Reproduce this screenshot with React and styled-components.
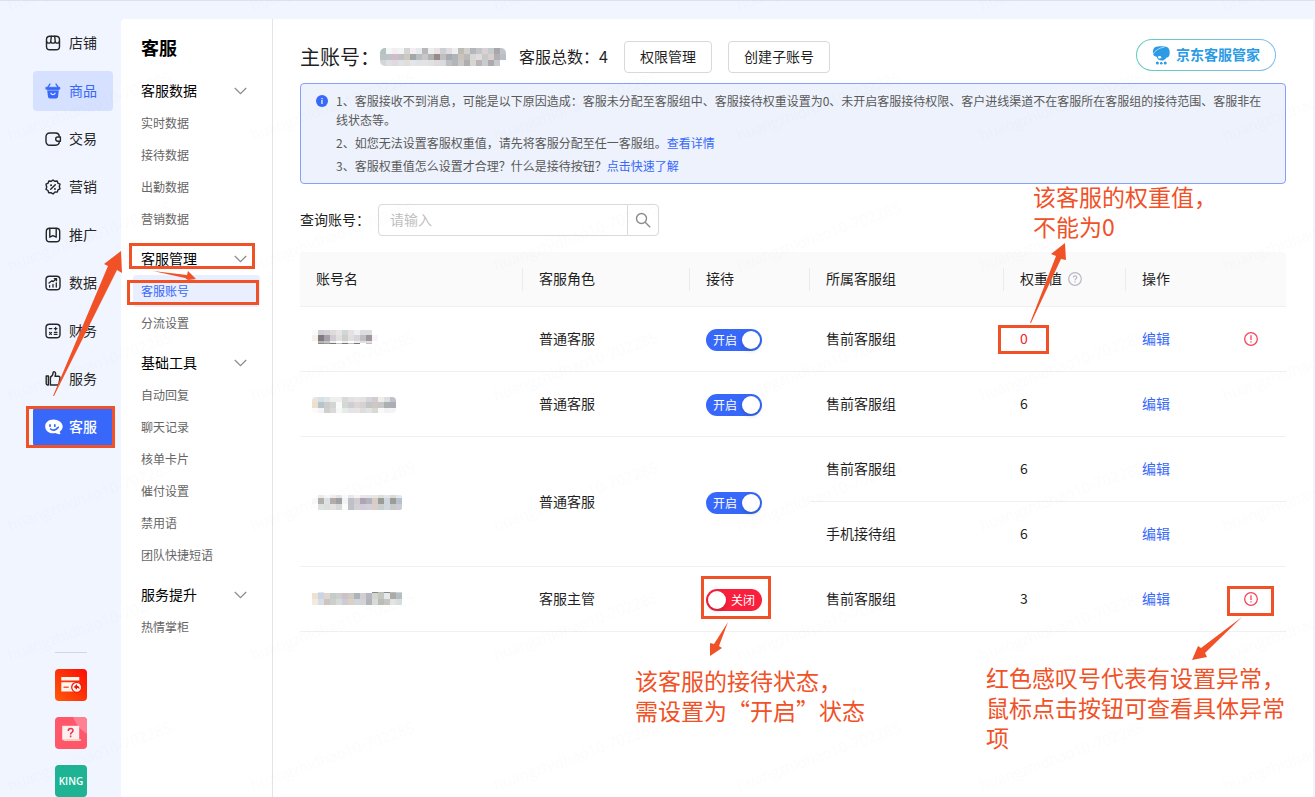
import React, { useState } from 'react';
import styled, { createGlobalStyle, css } from 'styled-components';

const GlobalStyle = createGlobalStyle`
  *, *::before, *::after {
    box-sizing: border-box;
  }

  body {
    margin: 0;
    background: #f0f5ff;
    color: #1f1f1f;
    font-family: 'Noto Sans CJK SC', 'Noto Sans', sans-serif;
    font-size: 14px;
    line-height: 20px;
  }

  button, input {
    font: inherit;
  }

  a {
    color: #3768fa;
    text-decoration: none;
  }
`;

const Page = styled.div`
  position: relative;
  display: flex;
  min-height: 100vh;
  padding: 18px 2px 0 0;
  border-top: 1px solid #dfe1ee;
`;

/* ---------- first level navigation ---------- */

const Rail = styled.nav`
  display: flex;
  flex: none;
  flex-direction: column;
  width: 121px;
  padding: 4px 8px 0 33px;
`;

const RailList = styled.ul`
  display: grid;
  gap: 8px;
  margin: 0;
  padding: 0;
  list-style: none;
`;

const RailLink = styled.a`
  display: flex;
  align-items: center;
  gap: 8px;
  height: 40px;
  padding: 0 0 2px 12px;
  border-radius: 4px;
  color: #262626;

  svg {
    flex: none;
    margin-top: 2px;
    overflow: visible;
  }

  ${({ $state }) =>
    $state === 'hover' &&
    css`
      background: #d6e0ff;
      color: #3768fa;
    `}

  ${({ $state }) =>
    $state === 'active' &&
    css`
      background: #3768fa;
      color: #fff;
      font-weight: 500;
    `}
`;

const Shortcuts = styled.div`
  display: grid;
  gap: 16px;
  width: 32px;
  margin: auto 0 0 22px;
  padding-top: 16px;
  border-top: 1px solid #d4d6da;
`;

const Shortcut = styled.a`
  display: flex;
  align-items: center;
  justify-content: center;
  height: 32px;
  border-radius: 4px;
  background: ${({ $bg }) => $bg};
  color: #fff;
  font-family: 'Open Sans', 'Noto Sans', sans-serif;
  font-size: 10px;
  font-weight: 600;
`;

/* ---------- second level navigation ---------- */

const SubNav = styled.nav`
  flex: none;
  width: 152px;
  padding: 0 12px 24px;
  border-right: 1px solid #e3e4e8;
  border-top-left-radius: 4px;
  background: #fff;
`;

const SubTitle = styled.h2`
  margin: 0;
  padding: 16px 8px 8px;
  color: #000;
  font-size: 18px;
  font-weight: 700;
  line-height: 24px;
`;

const GroupButton = styled.button`
  display: flex;
  align-items: center;
  justify-content: space-between;
  width: 100%;
  height: 40px;
  padding: 8px 13px 2px 8px;
  border: 0;
  background: none;
  color: #000;
  cursor: pointer;

  svg {
    margin-top: 2px;
  }
`;

const GroupList = styled.ul`
  margin: 0;
  padding: 0;
  list-style: none;
`;

const GroupLink = styled.a`
  display: block;
  padding-left: 8px;
  border-radius: 4px;
  background: ${({ $active }) => ($active ? '#e9efff' : 'none')};
  color: ${({ $active }) => ($active ? '#3768fa' : '#666')};
  font-size: 12px;
  line-height: 32px;
`;

/* ---------- main column ---------- */

const Main = styled.main`
  flex: 1;
  min-width: 0;
  padding: 20px 27px 24px;
  background: #fff;
`;

const Header = styled.header`
  display: flex;
  align-items: flex-start;
  justify-content: space-between;
  padding-right: 10px;
`;

const HeaderInfo = styled.div`
  display: flex;
  align-items: center;
  padding-top: 2px;
`;

const Account = styled.h1`
  display: flex;
  align-items: center;
  margin: 0 13px 0 0;
  font-size: 20px;
  font-weight: 400;
  line-height: 32px;
`;

const Total = styled.span`
  margin-right: 16px;
  padding-bottom: 2px;
  font-size: 16px;
`;

const OutlineButton = styled.button`
  height: 32px;
  margin-right: 16px;
  padding: 0 15px 2px;
  border: 1px solid #d9d9d9;
  border-radius: 4px;
  background: #fff;
  color: #1f1f1f;
  cursor: pointer;
`;

const ManagerLink = styled.a`
  display: flex;
  align-items: center;
  gap: 6px;
  height: 32px;
  padding: 0 15px 2px;
  border: 1px solid transparent;
  border-radius: 16px;
  background:
    linear-gradient(#fff, #fff) padding-box,
    linear-gradient(90deg, #5fcdbb, #7fbcf0) border-box;
  color: #2b9be6;
  font-weight: 700;

  svg {
    margin-top: 2px;
  }
`;

const Notice = styled.section`
  display: flex;
  gap: 8px;
  margin-top: 10px;
  padding: 7px 16px 8px 15px;
  border: 1px solid #87a0fc;
  border-radius: 4px;
  background: #edf2fc;
  color: #595959;
  font-size: 12px;
  line-height: 19px;

  > svg {
    flex: none;
    margin-top: 4px;
  }

  p {
    margin: 0 0 4px;
  }

  p:last-child {
    margin: 0;
  }
`;

const SearchRow = styled.form`
  display: flex;
  align-items: center;
  gap: 8px;
  margin: 20px 0 16px;

  label {
    padding-bottom: 2px;
  }
`;

const SearchBox = styled.div`
  display: flex;
  width: 281px;
  height: 32px;
  border: 1px solid #d9d9d9;
  border-radius: 4px;
  background: #fff;
`;

const SearchInput = styled.input`
  flex: 1;
  min-width: 0;
  padding: 0 11px 2px;
  border: 0;
  background: none;
  color: #1f1f1f;
  outline: 0;

  &::placeholder {
    color: #bfbfbf;
  }
`;

const SearchButton = styled.button`
  display: flex;
  align-items: center;
  justify-content: center;
  width: 31px;
  padding: 0;
  border: 0;
  border-left: 1px solid #d9d9d9;
  background: none;
  cursor: pointer;
`;

/* ---------- accounts table ---------- */

const Table = styled.table`
  width: 100%;
  border-spacing: 0;
  table-layout: fixed;
`;

const Th = styled.th`
  height: 55px;
  padding: 0 16px 2px;
  border-bottom: 1px solid #f0f0f0;
  background: linear-gradient(#ebebeb, #ebebeb) right center / 1px 23px no-repeat #fafafa;
  font-weight: 400;
  text-align: left;

  &:first-child {
    border-top-left-radius: 4px;
  }

  &:last-child {
    border-top-right-radius: 4px;
    background: #fafafa;
  }

  svg {
    margin-left: 6px;
    vertical-align: -2px;
  }
`;

const Td = styled.td`
  height: 65px;
  padding: 0 16px 2px;
  border-bottom: 1px solid #f0f0f0;
  color: ${({ $danger }) => ($danger ? '#f5222d' : 'inherit')};
`;

const NameTd = styled(Td)`
  padding: 0 12px;

  svg {
    display: block;
  }
`;

const SwitchTd = styled(Td)`
  padding: 2px 16px 0;
`;

const WarnTd = styled(Td)`
  padding: 0 16px;
`;

const SwitchLabel = styled.label`
  position: relative;
  display: flex;
  align-items: center;
  justify-content: space-between;
  flex-direction: ${({ $on }) => ($on ? 'row' : 'row-reverse')};
  width: 56px;
  height: 22px;
  padding: ${({ $on }) => ($on ? '0 2px 0 7px' : '0 7px 0 2px')};
  border-radius: 11px;
  background: ${({ $on }) => ($on ? '#3768fa' : '#fa1f3c')};
  color: #fff;
  font-size: 12px;
  cursor: pointer;

  &::after {
    content: '';
    width: 18px;
    height: 18px;
    border-radius: 50%;
    background: #fff;
    box-shadow: 0 2px 4px rgba(0, 35, 11, 0.2);
  }
`;

const SwitchInput = styled.input`
  position: absolute;
  inset: 0;
  margin: 0;
  opacity: 0;
  cursor: pointer;
`;

const WarnButton = styled.button`
  display: block;
  padding: 0;
  border: 0;
  background: none;
  cursor: pointer;

  svg {
    display: block;
  }
`;

/* ---------- annotations drawn over the page ---------- */

const Overlay = styled.svg`
  position: absolute;
  top: -1px;
  left: 0;
  width: 100%;
  height: calc(100% + 1px);
  pointer-events: none;
`;

const Note = styled.p`
  position: absolute;
  top: ${({ $top }) => $top}px;
  left: ${({ $left }) => $left}px;
  width: ${({ $width }) => $width}px;
  margin: 0;
  color: #f15127;
  font-size: 23px;
  line-height: 30px;
  white-space: pre-line;
`;

/* ---------- icons ---------- */

const Icon = ({ size = 16, children, ...rest }) => (
  <svg
    width={size}
    height={size}
    viewBox="0 0 16 16"
    fill="none"
    stroke="currentColor"
    strokeWidth="1.4"
    strokeLinecap="round"
    strokeLinejoin="round"
    aria-hidden="true"
    {...rest}
  >
    {children}
  </svg>
);

const railIcons = {
  shop: (
    <Icon>
      <rect x="1.5" y="1.2" width="13" height="13.6" rx="3.4" />
      <path d="M1.6 6.2c.2 2.6 4 2.6 4.2 0 .2 2.6 4.2 2.6 4.4 0 .2 2.6 4 2.6 4.2 0M6.3 1.3 5.8 6.2M9.7 1.3l.5 4.9" />
    </Icon>
  ),
  goods: (
    <Icon>
      <path d="M1.2 4.3h13.6v1.9H1.2z" fill="currentColor" strokeWidth=".8" />
      <path d="M2 6h12l-1 7.8a1.9 1.9 0 0 1-1.9 1.7H4.9A1.9 1.9 0 0 1 3 13.800z" fill="currentColor" stroke="none" />
      <path d="M3 4.200 5 1M13 4.200 11 1" />
      <path d="M5.900 10.300c.8 1.700 3.400 1.700 4.200 0" stroke="#d6e0ff" />
      <path d="M2.400 7.300h11.200" stroke="#d6e0ff" strokeWidth=".5" />
    </Icon>
  ),
  trade: (
    <Icon>
      <path d="M14.300 5.200A3.600 3.600 0 0 0 10.800 2H4.600A3.600 3.600 0 0 0 1 5.600v5A3.600 3.600 0 0 0 4.600 14.200h6.200a3.600 3.600 0 0 0 3.500-3.200" />
      <path d="M15.400 6v4.200h-2.600a2.100 2.100 0 0 1 0-4.200z" />
    </Icon>
  ),
  promo: (
    <Icon>
      <path d="M8 1l1.900 1.300 2.300-.3.700 2.200 2.100 1-.7 2.200.7 2.400-2 1.100-.7 2.200-2.300-.1L8 15l-2-1.400-2.300.1-.7-2.200-2-1.100.7-2.400L1 5.200l2.100-1L3.800 2l2.300.3z" />
      <path d="M10.300 5.700l-4.600 4.600" />
      <path d="M6 6.200h.1M9.900 9.900h.1" strokeWidth="1.900" />
    </Icon>
  ),
  spread: (
    <Icon>
      <rect x="1.300" y="1.200" width="13.400" height="13.600" rx="3.400" />
      <path d="M4.800 1.400v8.800L8 8.600l3.200 1.600V1.400" />
    </Icon>
  ),
  data: (
    <Icon>
      <rect x="1" y="1.200" width="14" height="13.600" rx="3.400" />
      <path d="M4.600 12v-1.400M8 12V9.300M11.300 12V7.800M4 8l3-2.300 1.200.8 3.300-2.800M9.400 3.700h2.100v2" strokeWidth="1.300" />
    </Icon>
  ),
  finance: (
    <Icon>
      <rect x="1" y="1.200" width="14" height="13.600" rx="3.400" />
      <path d="M4.200 5.600h2.600M9.300 5.600H12M10.650 4.250v2.700M4.500 9.300l2 2M6.500 9.300l-2 2M9.300 9.300H12M9.300 11.400H12" strokeWidth="1.200" />
    </Icon>
  ),
  service: (
    <Icon>
      <path d="M1.200 5h2.200v9H2.700A1.500 1.500 0 0 1 1.200 12.500z" />
      <path d="M5.400 6c1.900-.8 2.600-2.300 2.700-4.300.2-1.500 2.600-1.100 2.500.9 0 1-.2 1.700-.6 2.700h3.500c1.100 0 1.700.8 1.500 1.800l-1 5.300c-.2 1-.8 1.600-1.800 1.600H5.400z" />
    </Icon>
  ),
  support: (
    <Icon stroke="none">
      <path
        d="M8.400.6C3.800.6.2 3.500.2 7.400c0 4 3.600 6.900 8 6.900.9 0 1.800-.1 2.600-.3.900.9 2.700 1.400 5 1.100-.9-.8-1.100-1.700-.9-2.500 1.700-1.300 2.800-3 2.800-5C17.700 3.700 13.200.6 8.400.6z"
        fill="currentColor"
      />
      <path d="M5 5.900v1.300M9.800 5.900v1.300M5.600 10c1.800 1.900 5.400 1.500 7-1.200" stroke="#3768fa" strokeWidth="1.700" />
      <path d="M12 8.200l2-.9-.2 2.200z" fill="#3768fa" />
    </Icon>
  ),
};

const ChevronIcon = () => (
  <svg width="13" height="8" viewBox="0 0 13 8" fill="none" aria-hidden="true">
    <path d="M.8 1l5.700 5.600L12.200 1" stroke="#8c8c8c" strokeWidth="1.300" />
  </svg>
);

const InfoIcon = () => (
  <svg width="12" height="12" viewBox="0 0 12 12" aria-hidden="true">
    <circle cx="6" cy="6" r="6" fill="#3768fa" />
    <path d="M5.400 5.100h1.200v4H5.400zM5.400 2.900h1.200v1.300H5.400z" fill="#fff" />
  </svg>
);

const HelpIcon = () => (
  <svg width="14" height="14" viewBox="0 0 14 14" fill="none" stroke="#b8b9c6" strokeWidth="1.200" aria-hidden="true">
    <circle cx="7" cy="7" r="6.300" />
    <path d="M5.300 5.600c0-2.300 3.500-2.200 3.500-.1 0 1.200-1.800 1.300-1.800 2.700M7 9.300v1.300" />
  </svg>
);

const WarnIcon = () => (
  <svg width="14" height="14" viewBox="0 0 14 14" fill="none" stroke="#f8445c" strokeWidth="1.300" aria-hidden="true">
    <circle cx="7" cy="7" r="6.300" />
    <path d="M7 3.300v4.700M7 9.200v1.400" />
  </svg>
);

const SearchIcon = () => (
  <svg width="16" height="16" viewBox="0 0 16 16" fill="none" stroke="#8c8c8c" strokeWidth="1.400" aria-hidden="true">
    <circle cx="6.500" cy="6.500" r="5" />
    <path d="M10.200 10.200l5 5" />
  </svg>
);

const DogLogo = () => (
  <svg width="18" height="19" viewBox="0 0 18 19" aria-hidden="true">
    <path
      d="M3 1.200C6 0 12.500 0 15 1.100c2.600 1.600 3.200 4.700 2.400 7.800-.5 2-1.700 2.500-3 2.500-.9 2-2.700 3.100-4.800 3.100-2.600 0-4.400-1.300-4.900-3.700C2 10.500.9 8.800.9 6.200.9 4 1.600 2.100 3 1.200z"
      fill="#2b9be6"
    />
    <path d="M1.200 8C3 4.500 7 2 12.500 1" fill="none" stroke="#fff" strokeWidth=".6" />
    <ellipse cx="7.600" cy="11.200" rx="1.600" ry="1.200" fill="#fff" />
    <circle cx="5.300" cy="17" r="1.500" fill="#2b9be6" />
    <circle cx="9.300" cy="17.200" r="1.300" fill="#2b9be6" />
    <circle cx="13.200" cy="17" r="1.500" fill="#2b9be6" />
  </svg>
);

const CardIcon = () => (
  <svg width="32" height="32" viewBox="0 0 32 32" fill="none" aria-hidden="true">
    <path d="M6.300 8h18v3.500h-18zM6.300 13.200h18v9.400h-18z" fill="#fff5ef" />
    <path d="M8.500 18.200h5.200" stroke="#f33a10" strokeWidth="1.200" />
    <circle cx="21.700" cy="18.300" r="5" fill="#fff5ef" stroke="#f51d08" strokeWidth="1.300" />
    <path d="M18.800 18l3.200-2.900v1.700c1.600.1 2.500 1.300 2.500 3.300-.7-.9-1.400-1.200-2.500-1.200v1.800z" fill="#e01a0c" />
  </svg>
);

const QuestionIcon = () => (
  <svg width="32" height="32" viewBox="0 0 32 32" fill="none" aria-hidden="true">
    <path d="M18 0h10a4 4 0 0 1 4 4v13C26 13 21 8 18 0z" fill="#ff8093" />
    <path d="M7.200 8.800h17v14h-17z" fill="#fdeef0" />
    <path d="M7.200 22.300h18.600v1.700H9z" fill="#f7cdb9" />
    <path d="M13.300 13.900c0-3.200 4.700-3 4.700-.2 0 1.800-2.400 1.700-2.400 3.700M15.600 18.500v1.800" stroke="#e8364f" strokeWidth="1.600" />
  </svg>
);

// masked account names, one array of colours per line of blocks
const Mosaic = ({ rows, heights, top = 0, height = 18, radius = 0, label }) => {
  const width = Math.max(...rows.map(row => row.length)) * 6;
  const id = `mask-${label}`;
  let y = top;

  return (
    <svg width={width} height={height} role="img" aria-label="已隐藏的账号" shapeRendering="crispEdges">
      <clipPath id={id}>
        <rect width={width} y={top} height={heights.reduce((a, b) => a + b, 0)} rx={radius} />
      </clipPath>
      <g clipPath={`url(#${id})`}>
        {rows.map((row, r) => {
          const rowY = y;
          y += heights[r];
          return row.map((fill, c) => (
            <rect key={`${r}-${c}`} x={c * 6} y={rowY} width="6" height={heights[r]} fill={`#${fill}`} />
          ));
        })}
      </g>
    </svg>
  );
};

/* ---------- data ---------- */

const railItems = [
  { icon: 'shop', text: '店铺' },
  { icon: 'goods', text: '商品', state: 'hover' },
  { icon: 'trade', text: '交易' },
  { icon: 'promo', text: '营销' },
  { icon: 'spread', text: '推广' },
  { icon: 'data', text: '数据' },
  { icon: 'finance', text: '财务' },
  { icon: 'service', text: '服务' },
  { icon: 'support', text: '客服', state: 'active' },
];

const groups = [
  { title: '客服数据', items: ['实时数据', '接待数据', '出勤数据', '营销数据'] },
  { title: '客服管理', items: ['客服账号', '分流设置'] },
  { title: '基础工具', items: ['自动回复', '聊天记录', '核单卡片', '催付设置', '禁用语', '团队快捷短语'] },
  { title: '服务提升', items: ['热情掌柜'] },
];

const ownerMask = {
  label: 'owner',
  radius: 5,
  heights: [6, 6, 6],
  rows: [
    'b3c2c3 f5f5f5 f1eff2 f4f4f5 d5d5d6 f3eef1 e6eaec b9b7b9 ededee e9e2e4 ccd0d5 dfdddf eeeeef bcbcb7 d4cfcf b4b6b9 c4c5c9 d8d3d2 c7cacc a9a6ab bfc5cb'.split(' '),
    'b9c4c3 c1c4c6 d1bccb bfc1c2 cdc9be a1a7ab b9bdc0 c7c6c8 b3b0b1 958b8d c4bdbd a7abb0 b0b4b8 c9c3bb bcbab9 d6d7d8 e3dbd9 c7c9cd d9cfcc b3afb5 b8c0c5'.split(' '),
    'd3d6d5 dddfe2 e2d8e0 e0e1e3 dedfdc e3e6e9 e0e2e6 e4e2e3 e1e0e2 e0dadb d5dbe1 bac0c5 b2b6b9 c8c8c6 afaeb1 d7d4d2 b8b4b9 c9cbce abaaae c6cacf ffffff'.split(' '),
  ],
};

const accounts = [
  {
    mask: {
      label: 'a1',
      heights: [5, 6, 2, 1],
      rows: [
        'fbfaf8 d0cdd2 d3d0d8 dedbd9 e4e5e4 d2d6d4 e6e0df eeeff5 dddce1 dddcde ffffff'.split(' '),
        'f5f2ea 83787f a3a0ac d0ccd0 e0e0df cccfcd e3dfdd d6d5d9 bfbdc5 a09699 f6f5fb'.split(' '),
        'ffffff b5b5b5 c3c3c3 f0f0f0 ffffff f0f0f0 ffffff f0f0f0 e0e0e0 e0e0e0 ffffff'.split(' '),
        'ffffff 8a8a8a 999999 777777 c0c0c0 777777 c0c0c0 777777 ffffff c0c0c0 ffffff'.split(' '),
      ],
    },
    role: '普通客服',
    on: true,
    warn: true,
    teams: [{ name: '售前客服组', weight: 0 }],
  },
  {
    mask: {
      label: 'a2',
      radius: 4,
      top: 2,
      heights: [5, 6, 5],
      rows: [
        'ebe4da d5e1ea e2e5e6 efefef efefef d9d9d9 e4e0df e8e4e4 e2e2e6 d8d5da cfcdd5 f1ece8 dadfe3 c2c2c6'.split(' '),
        'efdfcd b6c5c8 cbcccc d4d4d3 fafafa cedad2 cecdd6 dbd5d7 d5d2d1 c4c5c8 d0c8be c6c9cc adb1ab aeacb8'.split(' '),
        'fafafa f2f4f5 cfcfcf dadada f7f7f7 e7ebe9 e4e4e6 e8e4e4 dddddd e3e3e3 d9d8d4 f9f9f9 f2f2f4 f2f4f6'.split(' '),
      ],
    },
    role: '普通客服',
    on: true,
    teams: [{ name: '售前客服组', weight: 6 }],
  },
  {
    mask: {
      label: 'a3',
      radius: 2,
      top: 2,
      heights: [3, 6, 6],
      rows: [
        'ffffff ececea f7f7f7 f1eeee e4e7ea fafafa e9e9ec f4f4f4 eae6ec e5e8ea ece6e2 dcdfdb e4e7ea d9dbd6 e1e8ee'.split(' '),
        'f9f9f9 b4b1ab dde3e5 b5adab a1a1a5 f3f3f3 bfbfc7 d0cdd1 aea4b3 b3b3bd d8ccc6 9a9d95 ced7df 9c9e96 b6c0cf'.split(' '),
        'ffffff dce4e2 dedede e2e2e0 d6d9d8 fafafa c0c0c8 d3d1d5 d1cdd8 d3d0d9 dccdc8 c9cfd1 d0d8de cacacd cdccd2'.split(' '),
      ],
    },
    role: '普通客服',
    on: true,
    teams: [
      { name: '售前客服组', weight: 6 },
      { name: '手机接待组', weight: 6 },
    ],
  },
  {
    mask: {
      label: 'a4',
      top: 2,
      heights: [1, 6, 6],
      rows: [
        'ffffff dfe6ef ffffff ffffff ffffff ffffff ffffff ffffff ffffff ffffff 888888 bbbbbb 888888 bbbbbb d0d8de'.split(' '),
        'efe1d0 cbd4e4 dfd6d0 c6cac9 cccfce cbc2c6 d0cac6 adb4b9 cfcfcf b8b5c3 d2d6cf c4c6c0 e4eaea aaacaa b5bfc5'.split(' '),
        'f4ebe0 dadde6 cfc5c0 cdcfce d6dbda cdcbd6 decfc5 d0d6dc cfd4d6 b4b3ba d8dbd8 bcbcb8 c5c5c2 e3e5e4 d9dddb'.split(' '),
      ],
    },
    role: '客服主管',
    on: false,
    warn: true,
    teams: [{ name: '售前客服组', weight: 3 }],
  },
];

const colWidths = [223, 167, 120, 194, 122, 102, 58];

const marks = [
  [26, 406, 89, 42],
  [129, 243, 126, 26],
  [127, 280, 132, 25],
  [998, 325, 51, 29],
  [701, 576, 70, 43],
  [1227, 586, 47, 30],
];

const arrows = [
  '53,396 108,266 104,264 121,251 122,273 117,270 54,396',
  '153,271 187,275 188,271 196,279 188,280 185,278',
  '1030,323 1056,256 1051,254 1065,243 1066,260 1061,259 1031,323',
  '728,622 714,644 710,643 710,656 722,648 719,646',
  '1242,617 1201,648 1198,646 1192,660 1207,657 1205,653',
];

const notes = [
  { top: 180, left: 1033, width: 190, text: '该客服的权重值，\n不能为0' },
  { top: 664, left: 635, width: 240, text: '该客服的接待状态，\n需设置为“开启”状态' },
  { top: 661, left: 986, width: 300, text: '红色感叹号代表有设置异常，鼠标点击按钮可查看具体异常项' },
];

/* ---------- pieces ---------- */

const Switch = ({ defaultOn }) => {
  const [on, setOn] = useState(defaultOn);

  return (
    <SwitchLabel $on={on}>
      <SwitchInput type="checkbox" checked={on} onChange={e => setOn(e.target.checked)} />
      {on ? '开启' : '关闭'}
    </SwitchLabel>
  );
};

const AccountRows = ({ account }) => {
  const { mask, role, on, warn, teams } = account;
  const span = teams.length;

  return teams.map((team, i) => (
    <tr key={team.name}>
      {i === 0 && (
        <>
          <NameTd rowSpan={span}>
            <Mosaic {...mask} />
          </NameTd>
          <Td rowSpan={span}>{role}</Td>
          <SwitchTd rowSpan={span}>
            <Switch defaultOn={on} />
          </SwitchTd>
        </>
      )}
      <Td>{team.name}</Td>
      <Td $danger={team.weight === 0}>{team.weight}</Td>
      <Td>
        <a href="#edit">编辑</a>
      </Td>
      <WarnTd>
        {warn && (
          <WarnButton type="button" aria-label="查看异常">
            <WarnIcon />
          </WarnButton>
        )}
      </WarnTd>
    </tr>
  ));
};

const App = () => (
  <>
    <GlobalStyle />
    <Page>
      <Rail>
        <RailList>
          {railItems.map(({ icon, text, state }) => (
            <li key={text}>
              <RailLink href="#" $state={state}>
                {railIcons[icon]}
                {text}
              </RailLink>
            </li>
          ))}
        </RailList>
        <Shortcuts>
          <Shortcut href="#" aria-label="账单" $bg="linear-gradient(45deg, #ff5a0a, #fb0d05)">
            <CardIcon />
          </Shortcut>
          <Shortcut href="#" aria-label="帮助" $bg="#ff5769">
            <QuestionIcon />
          </Shortcut>
          <Shortcut href="#" $bg="#1eb393">
            KING
          </Shortcut>
        </Shortcuts>
      </Rail>

      <SubNav>
        <SubTitle>客服</SubTitle>
        {groups.map(({ title, items }) => (
          <div key={title}>
            <GroupButton type="button">
              {title}
              <ChevronIcon />
            </GroupButton>
            <GroupList>
              {items.map(item => (
                <li key={item}>
                  <GroupLink href="#" $active={item === '客服账号'}>
                    {item}
                  </GroupLink>
                </li>
              ))}
            </GroupList>
          </div>
        ))}
      </SubNav>

      <Main>
        <Header>
          <HeaderInfo>
            <Account>
              主账号：
              <Mosaic {...ownerMask} />
            </Account>
            <Total>客服总数：4</Total>
            <OutlineButton type="button">权限管理</OutlineButton>
            <OutlineButton type="button">创建子账号</OutlineButton>
          </HeaderInfo>
          <ManagerLink href="#">
            <DogLogo />
            京东客服管家
          </ManagerLink>
        </Header>

        <Notice>
          <InfoIcon />
          <div>
            <p>
              1、客服接收不到消息，可能是以下原因造成：客服未分配至客服组中、客服接待权重设置为0、未开启客服接待权限、客户进线渠道不在客服所在客服组的接待范围、客服非在线状态等。
            </p>
            <p>
              2、如您无法设置客服权重值，请先将客服分配至任一客服组。<a href="#detail">查看详情</a>
            </p>
            <p>
              3、客服权重值怎么设置才合理？什么是接待按钮？<a href="#guide">点击快速了解</a>
            </p>
          </div>
        </Notice>

        <SearchRow onSubmit={e => e.preventDefault()}>
          <label htmlFor="account">查询账号：</label>
          <SearchBox>
            <SearchInput id="account" type="text" placeholder="请输入" />
            <SearchButton type="submit" aria-label="搜索">
              <SearchIcon />
            </SearchButton>
          </SearchBox>
        </SearchRow>

        <Table>
          <colgroup>
            {colWidths.map((width, i) => (
              <col key={i} width={width} />
            ))}
          </colgroup>
          <thead>
            <tr>
              <Th>账号名</Th>
              <Th>客服角色</Th>
              <Th>接待</Th>
              <Th>所属客服组</Th>
              <Th>
                权重值
                <HelpIcon />
              </Th>
              <Th colSpan={2}>操作</Th>
            </tr>
          </thead>
          <tbody>
            {accounts.map(account => (
              <AccountRows key={account.mask.label} account={account} />
            ))}
          </tbody>
        </Table>
      </Main>

      <Overlay aria-hidden="true">
        <defs>
          <pattern id="watermark" y="20" width="243" height="130" patternUnits="userSpaceOnUse">
            <text
              transform="translate(10 121) rotate(-20)"
              fontFamily="'Open Sans', sans-serif"
              fontSize="15"
              fill="#000"
              fillOpacity=".012"
            >
              huangzhidhao10-702285
            </text>
          </pattern>
        </defs>
        <rect width="100%" height="100%" fill="url(#watermark)" />
        {marks.map(([x, y, w, h]) => (
          <rect
            key={`${x}-${y}`}
            x={x + 1.5}
            y={y + 1.5}
            width={w - 3}
            height={h - 3}
            fill="none"
            stroke="#f15127"
            strokeWidth="3"
          />
        ))}
        {arrows.map(points => (
          <polygon key={points} points={points} fill="#f15127" />
        ))}
      </Overlay>
      {notes.map(({ top, left, width, text }) => (
        <Note key={text} $top={top} $left={left} $width={width}>
          {text}
        </Note>
      ))}
    </Page>
  </>
);

export default App;
